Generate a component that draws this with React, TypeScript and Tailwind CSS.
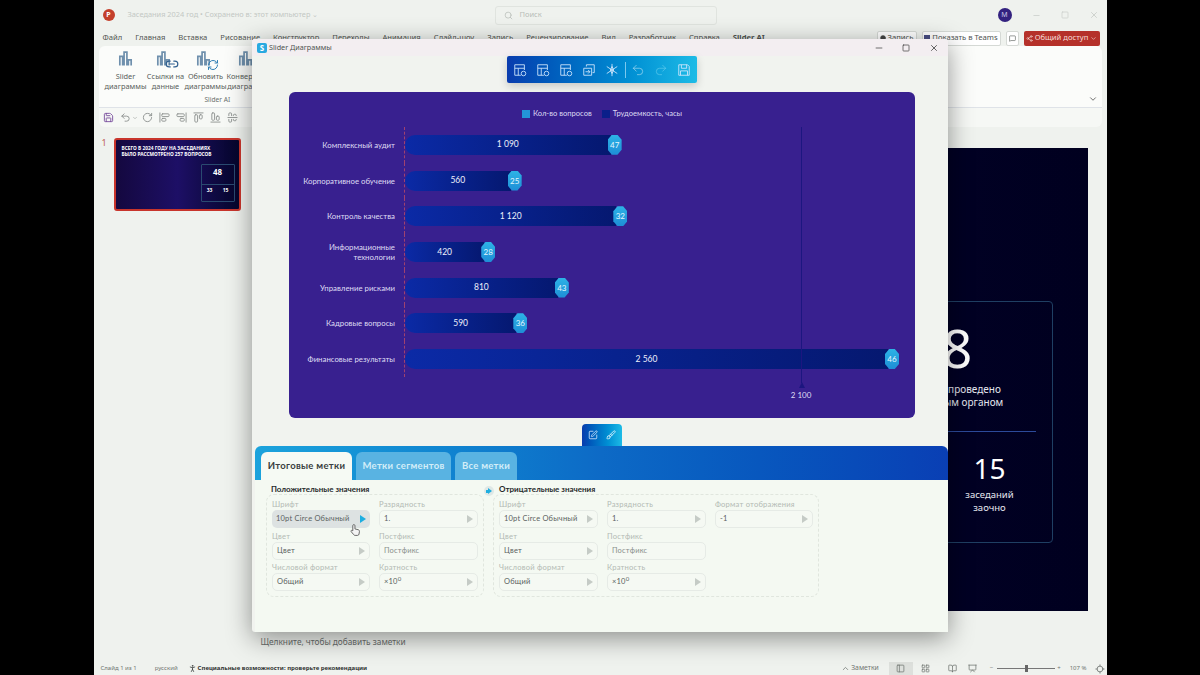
import { ChevronDown, ChevronUp, Minus, Square, X, Search, Undo2, Redo2, Brush, SquarePen, Share2, MessageSquare, Link2, RefreshCw, AlignStartVertical, AlignEndVertical, AlignStartHorizontal, AlignEndHorizontal, AlignCenterHorizontal, RotateCw, LayoutGrid, BookOpen, Presentation, Locate, Save, PanelLeft, Circle, PersonStanding } from "lucide-react";

const chartRows = [
  { label: "Комплексный аудит", value: 1090, text: "1 090", count: 47 },
  { label: "Корпоративное обучение", value: 560, text: "560", count: 25 },
  { label: "Контроль качества", value: 1120, text: "1 120", count: 32 },
  { label: "Информационные технологии", value: 420, text: "420", count: 28 },
  { label: "Управление рисками", value: 810, text: "810", count: 43 },
  { label: "Кадровые вопросы", value: 590, text: "590", count: 36 },
  { label: "Финансовые результаты", value: 2560, text: "2 560", count: 46 },
];

const pptTabs = ["Файл", "Главная", "Вставка", "Рисование", "Конструктор", "Переходы", "Анимация", "Слайд-шоу", "Запись", "Рецензирование", "Вид", "Разработчик", "Справка"];

function ToolIcon({ kind }: { kind: number }) {
  return (
    <svg viewBox="0 0 16 16" className="w-[14px] h-[14px]" fill="none" stroke="#cfe6fb" strokeWidth="1">
      {kind === 3 ? (
        <>
          <path d="M5 4V2h9v9h-2" />
          <path d="M2 6h9v8H2z" />
          <path d="M4 10h5m-2-2 2 2-2 2" />
        </>
      ) : kind === 4 ? (
        <path d="M8 1v14M2 4l12 8M14 4 2 12M8 4l-2 4 2 4 2-4z" />
      ) : kind === 5 ? (
        <>
          <path d="M2 2h10l2 2v10H2z" />
          <path d="M5 2v4h6V2M4 14V9h8v5" />
        </>
      ) : (
        <>
          <path d="M9 14H2V2h11v6" />
          <path d="M2 6h11M6 6v8" />
          <circle cx="12" cy="12" r="2.6" />
        </>
      )}
    </svg>
  );
}

function RibbonButton({ top, bottom, badge }: { top: string; bottom: string; badge?: React.ReactNode }) {
  return (
    <div className="w-[40px] flex flex-col items-center">
      <div className="relative w-[22px] h-[20px] mt-[4px]">
        <svg viewBox="0 0 24 24" className={`w-[17px] h-[17px] ${badge ? "" : "ml-[2px]"}`} fill="none" stroke="#6f90ad" strokeWidth="2.4">
          <path d="M4 22V9h4v13M10 22V3h4v19M16 22v-8h4v8" />
        </svg>
        {badge}
      </div>
      <div className="text-[7.4px] leading-[10px] text-[#5a5f5c] text-center mt-[1px] whitespace-nowrap">
        {top}
        <br />
        {bottom}
      </div>
    </div>
  );
}

function Field({ label, value, hover, muted, noArrow, className }: { label: string; value: React.ReactNode; hover?: boolean; muted?: boolean; noArrow?: boolean; className?: string }) {
  return (
    <div className={`${className ?? ""}`}>
      <div className="h-[11px] text-[7.6px] leading-[11px] text-[#b3b9b4] tracking-[0.2px] whitespace-nowrap">{label}</div>
      <div className={`h-[18px] rounded-[5px] flex items-center justify-between pl-[4px] pr-[4px] text-[7.5px] tracking-[0.2px] ${hover ? "bg-[#dde2e2]" : "border border-[#e6ebe6] bg-[#f5f9f3]"} ${muted ? "text-[#8a908c]" : "text-[#5a5f5e]"}`}>
        <span className="whitespace-nowrap">{value}</span>
        {!noArrow && (
          <span className={`w-0 h-0 border-y-[4px] border-y-transparent border-l-[6px] ${hover ? "border-l-[#1eaee0]" : "border-l-[#c5cbc6]"}`} />
        )}
      </div>
    </div>
  );
}

const power = (
  <>
    ×10<sup className="text-[6px] -top-[3px]">0</sup>
  </>
);

export default function App() {
  return (
    <div className="relative w-[1200px] h-[675px] bg-black flex justify-center overflow-hidden font-['Noto_Sans',sans-serif]">
      {/* PowerPoint behind */}
      <div className="w-[1013px] h-full bg-[#eff2ee] flex flex-col">
        <div className="h-[30px] flex items-center pl-[9px] pr-[8px] shrink-0">
          <div className="w-[12px] h-[12px] rounded-full bg-[#c4402c] flex items-center justify-center text-[7px] font-bold text-white">P</div>
          <div className="ml-[13px] w-[367px] text-[7.4px] text-[#c3c8c4] whitespace-nowrap">Заседания 2024 год • Сохранено в: этот компьютер ⌄</div>
          <div className="w-[222px] h-[19px] border border-[#e0e4df] rounded-[3px] flex items-center pl-[8px] gap-[7px] text-[7.5px] text-[#b8bdb8]">
            <Search size={9} />
            Поиск
          </div>
          <div className="ml-auto flex items-center">
            <div className="w-[14px] h-[14px] rounded-full bg-[#33227f] text-[7px] text-[#c8c4e6] flex items-center justify-center">M</div>
            <Minus size={9} className="ml-[20px] text-[#c8ccc8]" />
            <Square size={8} className="ml-[20px] text-[#c8ccc8]" />
            <X size={10} className="ml-[20px] text-[#c8ccc8]" />
          </div>
        </div>
        <div className="h-[16px] flex items-center pl-[9px] pr-[7px] text-[7.65px] text-[#4f5451] shrink-0 whitespace-nowrap">
          <div className="flex gap-[13px]">
            {pptTabs.map((t) => (
              <span key={t}>{t}</span>
            ))}
            <span className="font-bold">Slider AI</span>
          </div>
          <div className="ml-auto flex items-center gap-[5px]">
            <div className="h-[15px] w-[40px] border border-[#d5d9d5] rounded-[2px] bg-white flex items-center justify-center gap-[2px]">
              <Circle size={6} fill="#444" />
              Запись
            </div>
            <div className="h-[15px] w-[79px] border border-[#d5d9d5] rounded-[2px] bg-white flex items-center justify-center gap-[2px]">
              <div className="w-[6px] h-[6px] bg-[#4a4f85]" />
              Показать в Teams
            </div>
            <div className="h-[15px] w-[13px] border border-[#d5d9d5] rounded-[2px] bg-white flex items-center justify-center">
              <MessageSquare size={7} />
            </div>
            <div className="h-[15px] w-[76px] bg-[#b5312a] rounded-[2px] text-[#f5dcd8] flex items-center justify-center gap-[2px]">
              <Share2 size={7} />
              Общий доступ
              <ChevronDown size={7} />
            </div>
          </div>
        </div>
        <div className="mx-[5px] h-[61px] bg-[#fbfcfa] rounded-t-[6px] relative shrink-0">
          <div className="flex pl-[7px]">
            <RibbonButton top="Slider" bottom="диаграммы" />
            <RibbonButton top="Ссылки на" bottom="данные" badge={<Link2 size={14} className="absolute right-[-2px] bottom-[-1px] text-[#2f5f8f]" />} />
            <RibbonButton top="Обновить" bottom="диаграммы" badge={<RefreshCw size={12} className="absolute right-[-2px] bottom-[-1px] text-[#2f7fb5]" />} />
            <RibbonButton top="Конвертер" bottom="диаграмм" />
          </div>
          <div className="absolute left-[106px] bottom-[2px] text-[6.6px] text-[#6a6f6c]">Slider AI</div>
          <ChevronDown size={10} className="absolute right-[4px] bottom-[3px] text-[#555]" />
        </div>
        <div className="mx-[5px] h-[20px] bg-[#f6f8f5] rounded-b-[6px] flex items-center pl-[4px] text-[#8d928f] shrink-0 border-t border-[#dfe3e8]">
          <Save size={11} className="text-[#7a4f9e]" />
          <Undo2 size={11} className="ml-[6px]" />
          <ChevronDown size={6} className="ml-[1px]" />
          <RotateCw size={11} className="ml-[4px]" />
          <AlignStartVertical size={11} className="ml-[6px]" />
          <AlignEndVertical size={11} className="ml-[6px]" />
          <AlignStartHorizontal size={11} className="ml-[6px]" />
          <AlignEndHorizontal size={11} className="ml-[6px]" />
          <AlignCenterHorizontal size={11} className="ml-[6px]" />
        </div>
        <div className="flex-1 flex min-h-0">
          <div className="w-[171px] shrink-0 pl-[8px] pt-[11px] flex">
            <div className="w-[12px] text-[9px] text-[#c06055] leading-[10px]">1</div>
            <div className="w-[127px] h-[73px] border-2 border-[#c8352c] rounded-[3px] bg-gradient-to-r from-[#14083f] via-[#1d0f66] to-[#06062c] pl-[6px] pt-[5px] text-[4.8px] leading-[6px] font-bold text-white">
              ВСЕГО В 2024 ГОДУ НА ЗАСЕДАНИЯХ
              <br />
              БЫЛО РАССМОТРЕНО 257 ВОПРОСОВ
              <div className="ml-[79px] mt-[7px] w-[34px] h-[38px] border border-[#2a4a70] rounded-[1px] text-center">
                <div className="text-[8px] leading-[14px]">48</div>
                <div className="mt-[5px] flex justify-around border-t border-[#2a4a70] pt-[2px] text-[5px]">
                  <span>33</span>
                  <span>15</span>
                </div>
              </div>
            </div>
          </div>
          <div className="flex-1 flex flex-col min-w-0">
            <div className="h-[463px] mt-[21px] ml-[-10px] mr-[19px] bg-gradient-to-r from-[#14083f] to-[#00001f] flex justify-end pt-[153px] pr-[35px] shrink-0">
              <div className="w-[220px] h-[242px] border border-[#1f3f63] rounded-[4px] flex flex-col text-center text-white">
                <div className="h-[130px] flex flex-col items-center pt-[18px] mx-[16px] border-b border-[#2c4a9a]">
                  <div className="text-[52px] leading-[56px]">48</div>
                  <div className="text-[10px] leading-[12.5px] mt-[7px] text-[#e4e6ee] whitespace-nowrap">
                    встреч всего проведено
                    <br />
                    коллегиальным органом
                  </div>
                </div>
                <div className="flex flex-1">
                  <div className="w-1/2" />
                  <div className="w-[94px] flex flex-col items-center pt-[18px]">
                    <div className="text-[28px] leading-[36px]">15</div>
                    <div className="text-[9.5px] leading-[13px] mt-[2px] text-[#e4e6ee]">
                      заседаний
                      <br />
                      заочно
                    </div>
                  </div>
                </div>
              </div>
            </div>
            <div className="ml-[-10px] mt-[25px] pl-[6px] text-[8.3px] text-[#6a6f6c]">Щелкните, чтобы добавить заметки</div>
          </div>
        </div>
        <div className="h-[15px] shrink-0 flex items-center pl-[7px] pr-[2px] pt-[2px] text-[6px] text-[#707571] whitespace-nowrap">
          <span>Слайд 1 из 1</span>
          <span className="ml-[18px]">русский</span>
          <PersonStanding size={9} className="ml-[10px] text-[#2f3331]" />
          <span className="ml-[1px] font-bold text-[#2f3331]">Специальные возможности: проверьте рекомендации</span>
          <div className="ml-auto flex items-center">
            <ChevronUp size={9} />
            <span className="ml-[1px] text-[6.8px]">Заметки</span>
            <div className="ml-[10px] w-[24px] h-[13px] bg-[#dde0dc] flex items-center justify-center">
              <PanelLeft size={9} />
            </div>
            <LayoutGrid size={9} className="ml-[8px]" />
            <BookOpen size={9} className="ml-[18px]" />
            <Presentation size={9} className="ml-[11px]" />
            <span className="ml-[13px]">−</span>
            <div className="ml-[4px] w-[58px] h-[1px] bg-[#777] flex justify-center items-center">
              <div className="w-[3px] h-[7px] bg-[#666]" />
            </div>
            <span className="ml-[2px]">+</span>
            <span className="ml-[9px]">107 %</span>
            <Locate size={10} className="ml-[8px]" />
          </div>
        </div>
      </div>

      {/* Slider window */}
      <div className="absolute left-[252px] top-[39px] w-[696px] h-[593px] bg-[#f1f3ef] rounded-[3px] flex flex-col shadow-[0_6px_26px_rgba(0,0,0,0.42)] font-['Lato','Noto_Sans',sans-serif]">
        <div className="h-[17px] bg-[#f3eef1] rounded-t-[3px] flex items-center pl-[5px] pr-[9px] shrink-0 font-['Noto_Sans',sans-serif]">
          <div className="w-[10px] h-[10px] rounded-[2px] bg-[#29a9e0] text-white text-[8px] font-bold leading-[10px] text-center">S</div>
          <span className="ml-[2px] text-[7.2px] text-[#4e5350]">Slider Диаграммы</span>
          <Minus size={10} className="ml-auto text-[#555]" />
          <Square size={8} className="ml-[18px] text-[#333]" />
          <X size={10} className="ml-[19px] text-[#444]" />
        </div>
        <div className="w-[190px] h-[27px] ml-[255px] bg-gradient-to-r from-[#0a3cae] to-[#1dbbe6] rounded-[2px] flex items-center pl-[6px] gap-[9px] shrink-0 shadow-[0_3px_8px_rgba(0,0,0,0.18)]">
          <ToolIcon kind={0} />
          <ToolIcon kind={1} />
          <ToolIcon kind={2} />
          <ToolIcon kind={3} />
          <ToolIcon kind={4} />
          <div className="w-px h-[16px] bg-[#7cc8ee] -ml-[3px] -mr-[4px]" />
          <Undo2 size={14} strokeWidth={1} className="text-[#bfe6f7]" />
          <Redo2 size={14} strokeWidth={1} className="text-[#6cd0f0]" />
          <ToolIcon kind={5} />
        </div>
        <div className="relative w-[626px] h-[326px] ml-[37px] mt-[9px] bg-[#38208f] rounded-[6px] shrink-0">
          <div className="flex justify-center items-center gap-[10px] pt-[9px] h-[35px] text-[7.6px] text-[#dcd9f2]">
            <div className="flex items-center gap-[3px]">
              <div className="w-[8px] h-[8px] bg-[#2394d8]" />
              Кол-во вопросов
            </div>
            <div className="flex items-center gap-[3px]">
              <div className="w-[8px] h-[8px] bg-[#0a1f8a]" />
              Трудоемкость, часы
            </div>
          </div>
          <div className="flex flex-col">
            {chartRows.map((r) => (
              <div key={r.label} className="flex h-[35.7px] items-center">
                <div className="w-[106px] text-right text-[7.8px] leading-[10px] text-[#dfdcf3]">{r.label}</div>
                <div className="ml-[9px] h-full flex items-center border-l border-dashed border-[#a0416f]">
                  <div className="h-[20px] rounded-l-full bg-gradient-to-r from-[#0b2aa6] to-[#051870] flex items-center justify-center text-[8.5px] text-[#eef0fb]" style={{ width: (r.value / 2560) * 483 }}>
                    {r.text}
                  </div>
                  <div className="-ml-[3px] w-[14px] h-[20px] bg-gradient-to-b from-[#2db3e6] to-[#1e8ed6] [clip-path:polygon(30%_0,70%_0,100%_25%,100%_75%,70%_100%,30%_100%,0_75%,0_25%)] flex items-center justify-center text-[8px] text-[#e4f6fd]">
                    {r.count}
                  </div>
                </div>
              </div>
            ))}
          </div>
          <div className="absolute left-[512px] top-[35px] w-px h-[256px] bg-[#1c1680]" />
          <div className="absolute left-[510px] top-[290px] w-0 h-0 border-x-[3px] border-x-transparent border-b-[6px] border-b-[#1c1680]" />
          <div className="absolute left-[492px] top-[297px] w-[40px] text-center text-[8px] text-[#dfdcf3]">2 100</div>
        </div>
        <div className="h-[22px] w-[40px] ml-[330px] mt-[6px] rounded-t-[4px] bg-gradient-to-r from-[#0a3cae] to-[#1dbbe6] flex items-center justify-center gap-[8px] shrink-0">
          <SquarePen size={10} className="text-[#cfe6fb]" />
          <Brush size={10} className="text-[#e6f6fd]" />
        </div>
        <div className="flex-1 ml-[3px] rounded-t-[6px] bg-[#f4f9f2] flex flex-col">
          <div className="h-[34px] rounded-t-[6px] bg-gradient-to-r from-[#1ca3dc] via-[#0d6ac6] to-[#0a3fb4] flex items-end pl-[6px] gap-[4px] shrink-0 text-[9.5px] font-bold tracking-[0.3px]">
            <div className="w-[91px] h-[28px] rounded-t-[6px] bg-[#f6faf4] text-[#3a3f41] flex items-center justify-center">Итоговые метки</div>
            <div className="w-[95px] h-[28px] rounded-t-[6px] bg-[#59b3e2] text-[#d3edf8] flex items-center justify-center">Метки сегментов</div>
            <div className="w-[62px] h-[28px] rounded-t-[6px] bg-[#59b3e2] text-[#d3edf8] flex items-center justify-center">Все метки</div>
          </div>
          <div className="flex pl-[11px] pt-[4px]">
            <div className="w-[218px]">
              <div className="h-[10px] pl-[5px] text-[8px] leading-[10px] font-bold text-[#26292b]">Положительные значения</div>
              <div className="h-[103px] border border-dashed border-[#e0e6de] rounded-[8px] pl-[5px] pt-[4px] grid grid-cols-[98px_99px] gap-x-[9px] content-start">
                <Field label="Шрифт" value="10pt Circe Обычный" hover />
                <Field label="Разрядность" value="1." />
                <Field label="Цвет" value="Цвет" className="mt-[2.5px]" />
                <Field label="Постфикс" value="Постфикс" muted noArrow className="mt-[2.5px]" />
                <Field label="Числовой формат" value="Общий" className="mt-[2.5px]" />
                <Field label="Кратность" value={power} className="mt-[2.5px]" />
              </div>
            </div>
            <div className="w-[9px] flex justify-center pt-[2px]">
              <div className="w-[10px] h-[10px] shrink-0 rounded-full bg-[#dfe8e6] flex items-center justify-center">
                <div className="w-[2px] h-[3px] bg-[#1eaee0]" />
                <div className="w-0 h-0 border-y-[3px] border-y-transparent border-l-[4px] border-l-[#1eaee0]" />
              </div>
            </div>
            <div className="w-[326px]">
              <div className="h-[10px] pl-[6px] text-[8px] leading-[10px] font-bold text-[#26292b]">Отрицательные значения</div>
              <div className="h-[103px] border border-dashed border-[#e0e6de] rounded-[8px] pl-[5px] pt-[4px] grid grid-cols-[99px_99px_98px] gap-x-[9px] content-start">
                <Field label="Шрифт" value="10pt Circe Обычный" />
                <Field label="Разрядность" value="1." />
                <Field label="Формат отображения" value="-1" />
                <Field label="Цвет" value="Цвет" className="mt-[2.5px]" />
                <Field label="Постфикс" value="Постфикс" muted noArrow className="mt-[2.5px]" />
                <div />
                <Field label="Числовой формат" value="Общий" className="mt-[2.5px]" />
                <Field label="Кратность" value={power} className="mt-[2.5px]" />
              </div>
            </div>
          </div>
        </div>
      </div>
      {/* cursor */}
      <svg viewBox="0 0 24 24" className="absolute left-[349px] top-[523px] w-[13px] h-[14px]" fill="#f4f4f4" stroke="#555" strokeWidth="1.6">
        <path d="M9 2c1.2 0 2 .8 2 2v6l6 1.5c1.5.4 2.5 1.5 2.3 3l-.8 5c-.2 1.5-1.2 2.5-2.7 2.5h-4.5c-1.2 0-2-.5-2.7-1.5L4 15c-.7-1-.3-2 .6-2.4.8-.3 1.5 0 2.4 1V4c0-1.2.8-2 2-2z" />
      </svg>
    </div>
  );
}
